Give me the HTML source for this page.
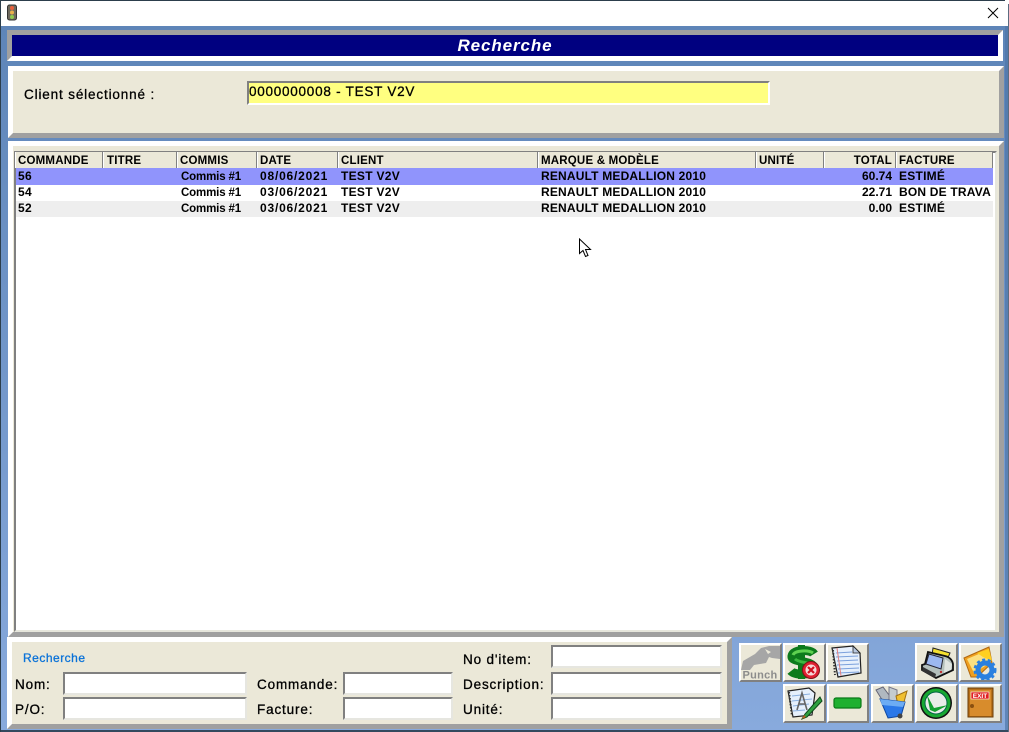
<!DOCTYPE html>
<html><head><meta charset="utf-8"><style>
html,body{margin:0;padding:0}
body{width:1009px;height:732px;overflow:hidden;position:relative;font-family:"Liberation Sans",sans-serif;color:#000;background:#fff}
div{box-sizing:border-box}
.a{position:absolute}
.bg{left:0;top:26px;width:1009px;height:706px;background:linear-gradient(#5e85b8,#88aadd)}
.out{position:absolute;border:5px solid;border-color:#fff #a0a0a0 #a0a0a0 #fff;background:#ebe8d8}
.inp{position:absolute;border:2px solid;border-color:#808080 #e6e6e0 #e6e6e0 #808080;background:#fff;height:23px}
.l{position:absolute;font-size:13.5px;line-height:16px;letter-spacing:.85px;white-space:nowrap;-webkit-text-stroke:.3px #000}
.g{position:absolute;font-size:12px;line-height:16px;font-weight:bold;white-space:nowrap;margin-top:-1px}
.h{position:absolute;top:152px;height:16px;background:#ebe8d8;border-right:1px solid #808080;border-left:1px solid #fff;font-size:11.5px;line-height:18px;font-weight:bold;letter-spacing:.2px;padding-left:2px;white-space:nowrap;overflow:hidden}
.r{position:absolute;left:16px;width:977px}
.b{position:absolute;width:43px;height:39px;background:#ebe8d8;border:2px solid;border-color:#fff #808080 #808080 #fff;overflow:hidden}
.b svg{position:absolute;left:-2px;top:-2px;width:43px;height:39px}
.g.c{letter-spacing:-.15px;font-size:11.5px;margin-top:0}
.d{letter-spacing:.8px;left:260px}
.t{letter-spacing:.3px;left:341px}
.m{letter-spacing:.18px;left:541px}
.e{letter-spacing:.25px;left:899px}
.n{letter-spacing:.3px;left:18px}
</style></head><body>
<div class="a" style="left:0;top:0;width:1005px;height:1px;background:#2c3e4c"></div>
<div class="a" style="left:0;top:0;width:1px;height:732px;background:#2c3e4c;z-index:3"></div>
<div class="a" style="left:1008px;top:4px;width:1px;height:728px;background:#5c6c80;z-index:3"></div>
<svg class="a" style="left:6px;top:4px" width="12" height="17" viewBox="0 0 12 17"><rect x="1.5" y="1" width="9" height="15" rx="2" fill="#6f6a5e" stroke="#333"/><circle cx="6" cy="4" r="2" fill="#e8603c"/><circle cx="6" cy="8.5" r="2" fill="#eab04a"/><circle cx="6" cy="13" r="2" fill="#8fca4e"/></svg>
<svg class="a" style="left:987px;top:7px" width="12" height="12" viewBox="0 0 12 12"><path d="M1 1L11 11M11 1L1 11" stroke="#000" stroke-width="1"/></svg>
<div class="a bg"></div>
<div class="a" style="left:1005px;top:26px;width:3px;height:706px;background:#4f76a8;opacity:.7"></div>
<div class="a" style="left:0;top:730px;width:1009px;height:2px;background:#34495e"></div>

<div class="a" style="left:7px;top:30px;width:996px;height:31px;border:5px solid;border-color:#a0a0a0 #fff #fff #a0a0a0;background:#000080"></div>
<div class="a" style="left:7px;top:36px;width:996px;text-align:center;font-size:17px;line-height:19px;font-weight:bold;font-style:italic;color:#fff;letter-spacing:.9px">Recherche</div>

<div class="out" style="left:8px;top:66px;width:996px;height:72px"></div>
<div class="l" style="left:24px;top:87px">Client sélectionné :</div>
<div class="a" style="left:247px;top:81px;width:523px;height:24px;border:2px solid;border-color:#808080 #fff #fff #808080;background:#ffff80;font-size:13.5px;line-height:17px;letter-spacing:.75px;padding-left:0;-webkit-text-stroke:.3px #000;white-space:nowrap">0000000008 - TEST V2V</div>

<div class="out" style="left:8px;top:141px;width:996px;height:496px"></div>
<div class="a" style="left:14px;top:151px;width:983px;height:481px;border:2px solid;border-color:#808080 #e6e6dc #e6e6dc #808080;background:#fff"></div>

<div class="h" style="left:15px;width:88px;letter-spacing:.2px">COMMANDE</div>
<div class="h" style="left:103px;width:74px;padding-left:3px">TITRE</div>
<div class="h" style="left:177px;width:80px">COMMIS</div>
<div class="h" style="left:257px;width:81px">DATE</div>
<div class="h" style="left:338px;width:200px">CLIENT</div>
<div class="h" style="left:538px;width:218px">MARQUE &amp; MODÈLE</div>
<div class="h" style="left:756px;width:68px">UNITÉ</div>
<div class="h" style="left:824px;width:72px;padding:0 3px 0 0;text-align:right">TOTAL</div>
<div class="h" style="left:896px;width:97px">FACTURE</div>

<div class="r" style="top:168px;height:17px;background:#9094fc"></div>
<div class="r" style="top:201px;height:16px;background:#eeeeee"></div>

<div class="g n" style="top:169px">56</div><div class="g c" style="left:181px;top:169px">Commis #1</div><div class="g d" style="top:169px">08/06/2021</div><div class="g t" style="top:169px">TEST V2V</div><div class="g m" style="top:169px">RENAULT MEDALLION 2010</div><div class="g" style="right:117px;top:169px">60.74</div><div class="g e" style="top:169px">ESTIMÉ</div>
<div class="g n" style="top:185px">54</div><div class="g c" style="left:181px;top:185px">Commis #1</div><div class="g d" style="top:185px">03/06/2021</div><div class="g t" style="top:185px">TEST V2V</div><div class="g m" style="top:185px">RENAULT MEDALLION 2010</div><div class="g" style="right:117px;top:185px">22.71</div><div class="g" style="left:899px;top:185px;letter-spacing:.2px">BON DE TRAVA</div>
<div class="g n" style="top:201px">52</div><div class="g c" style="left:181px;top:201px">Commis #1</div><div class="g d" style="top:201px">03/06/2021</div><div class="g t" style="top:201px">TEST V2V</div><div class="g m" style="top:201px">RENAULT MEDALLION 2010</div><div class="g" style="right:117px;top:201px">0.00</div><div class="g e" style="top:201px">ESTIMÉ</div>

<svg class="a" style="left:578px;top:238px" width="14" height="20" viewBox="0 0 14 20"><path d="M1.5 1V15.5L5 12.5L7.5 18.5L10 17.5L7.5 11.5H12.5Z" fill="#fff" stroke="#000" stroke-width="1"/></svg>

<div class="out" style="left:7px;top:637px;width:725px;height:92px"></div>
<div class="a" style="left:23px;top:650px;font-size:12px;line-height:17px;color:#0a72d8;letter-spacing:.5px;-webkit-text-stroke:.3px #0a72d8">Recherche</div>
<div class="l" style="left:15px;top:677px">Nom:</div>
<div class="l" style="left:15px;top:702px">P/O:</div>
<div class="l" style="left:257px;top:677px">Commande:</div>
<div class="l" style="left:257px;top:702px">Facture:</div>
<div class="l" style="left:463px;top:652px">No d'item:</div>
<div class="l" style="left:463px;top:677px">Description:</div>
<div class="l" style="left:463px;top:702px">Unité:</div>
<div class="inp" style="left:63px;top:672px;width:184px"></div>
<div class="inp" style="left:63px;top:697px;width:184px"></div>
<div class="inp" style="left:343px;top:672px;width:110px"></div>
<div class="inp" style="left:343px;top:697px;width:110px"></div>
<div class="inp" style="left:551px;top:645px;width:171px"></div>
<div class="inp" style="left:551px;top:672px;width:171px"></div>
<div class="inp" style="left:551px;top:697px;width:171px"></div>

<!-- Punch -->
<div class="b" style="left:739px;top:643px"><svg viewBox="0 0 43 39"><path d="M2 27L4 18L16 11L22 5L30 3H41V16L33 15L30 14L27 20L15 22L11 27Z" fill="#a6a6a6"/><path d="M26 6L32 9L29 11Z" fill="#ebe8d8"/><text x="21" y="35.5" text-anchor="middle" font-family="Liberation Sans" font-size="11" font-weight="bold" letter-spacing=".3" fill="#8c8c8c">Punch</text></svg></div>
<!-- Dollar -->
<div class="b" style="left:783px;top:643px"><svg viewBox="0 0 43 39"><rect x="15" y="2" width="7" height="34" fill="#0d7a1c"/><path d="M31 11C28 6 10 6 9 13C8 20 30 17 31 25C31 32 12 33 8 28" fill="none" stroke="#0d7a1c" stroke-width="9"/><path d="M30 10C26 7 12 7 10 12" fill="none" stroke="#5ed050" stroke-width="3"/><path d="M12 16C16 20 26 19 29 22" fill="none" stroke="#3cb840" stroke-width="3"/><circle cx="28" cy="27" r="8.5" fill="#e02030" stroke="#801018"/><circle cx="28" cy="27" r="5.5" fill="#f4d8d8"/><path d="M25 24L31 30M31 24L25 30" stroke="#d01020" stroke-width="2.2"/></svg></div>
<!-- Doc -->
<div class="b" style="left:826px;top:643px"><svg viewBox="0 0 43 39"><path d="M6 5L27 3L34 10L35 30L12 34Z" fill="#e6f0fc" stroke="#222" stroke-width="1.2"/><path d="M27 3L27 10L34 10Z" fill="#b8c8e0" stroke="#222" stroke-width=".8"/><path d="M10 10L26 9M10 14L32 13M11 18L32 17M11 22L33 21M12 26L33 25M12 30L33 29" stroke="#7aa0dc" stroke-width="1"/><path d="M11 5L15 33" stroke="#e08080" stroke-width="1"/><path d="M7 7L9 32" stroke="#333" stroke-width="2" stroke-dasharray="1.5 1.5"/></svg></div>
<!-- Printer -->
<div class="b" style="left:915px;top:643px"><svg viewBox="0 0 43 39"><path d="M18 5L35 10L32 17L17 12Z" fill="#f4e030" stroke="#222"/><path d="M13 9L30 13C35 14 38 18 38 22V27L21 35L7 27V22L10 21Z" fill="#b4c0bc" stroke="#111" stroke-width="1.8"/><path d="M14 11L28 15L26 26L11 21Z" fill="#9cb8f0" stroke="#223"/><path d="M8 24L21 31L20 35L7 28Z" fill="#333"/><path d="M30 16L37 21L36 27L29 30Z" fill="#dfe4e0"/><circle cx="26" cy="29" r="1.2" fill="#c03030"/></svg></div>
<!-- Folder gear -->
<div class="b" style="left:959px;top:643px"><svg viewBox="0 0 43 39"><path d="M5 15L30 4L33 20L18 34L12 34Z" fill="#f0a020" stroke="#b06810"/><path d="M8 16L27 8L31 20L15 30Z" fill="#fce080"/><path d="M18 10L30 6L33 18L24 14Z" fill="#ffd020"/><circle cx="26" cy="27" r="7" fill="none" stroke="#2a80e0" stroke-width="5"/><circle cx="26" cy="27" r="10" fill="none" stroke="#2a80e0" stroke-width="3" stroke-dasharray="3 2.5"/></svg></div>
<!-- Pencil doc -->
<div class="b" style="left:783px;top:684px"><svg viewBox="0 0 43 39"><path d="M5 7L26 4L32 9L29 31L10 33Z" fill="#e6f0fc" stroke="#222" stroke-width="1.2"/><path d="M9 12L27 10M9 17L29 15M10 22L26 20M10 27L22 26" stroke="#8ab0e0" stroke-width="1"/><path d="M6 8L9 32" stroke="#333" stroke-width="2" stroke-dasharray="1.5 1.5"/><path d="M14 26L19 9L24 26M16 20H22" fill="none" stroke="#666" stroke-width="1.6"/><path d="M37 13L22 30L19 35L24 33L39 17Z" fill="#2fa040" stroke="#0c4a18"/><path d="M19 35L21 31L23 33Z" fill="#c06020"/></svg></div>
<!-- Minus -->
<div class="b" style="left:827px;top:684px;width:42px"><svg viewBox="0 0 43 39"><rect x="7" y="14" width="27" height="10" rx="2" fill="#1fb030" stroke="#0a7a18" stroke-width="1.2"/></svg></div>
<!-- Bin -->
<div class="b" style="left:871px;top:684px"><svg viewBox="0 0 43 39"><path d="M5 6L12 3L21 15L13 19Z" fill="#b0b8c0" stroke="#667"/><path d="M18 3L26 6L26 17L18 17Z" fill="#c4ccd0" stroke="#778"/><path d="M25 12L36 7L33 18L27 21Z" fill="#f0c030" stroke="#a07010"/><path d="M9 15L34 18L30 32L17 34Z" fill="#2a78e8" stroke="#1048a0"/><path d="M9 15L34 18L32 23L11 21Z" fill="#6cacf4"/><circle cx="29" cy="32" r="2.5" fill="#444"/></svg></div>
<!-- Check -->
<div class="b" style="left:915px;top:684px"><svg viewBox="0 0 43 39"><circle cx="21" cy="19" r="16" fill="#111"/><circle cx="21" cy="19" r="14.5" fill="#18a832"/><circle cx="21" cy="19" r="11" fill="#e8ece8" stroke="#064"/><path d="M12 11L19 24L33 21L20 28L15 26Z" fill="#12a030"/></svg></div>
<!-- Exit -->
<div class="b" style="left:959px;top:684px"><svg viewBox="0 0 43 39"><rect x="9" y="4" width="25" height="29" fill="#b87018" stroke="#6a3c08"/><rect x="11" y="6" width="21" height="26" fill="#d88c2c"/><rect x="12" y="8" width="18" height="7" fill="#e02020" stroke="#fff" stroke-width=".6"/><text x="21" y="14" text-anchor="middle" font-family="Liberation Sans" font-size="6.5" font-weight="bold" fill="#fff">EXIT</text><circle cx="13" cy="22" r="2" fill="#8a5010"/></svg></div>
</body></html>
